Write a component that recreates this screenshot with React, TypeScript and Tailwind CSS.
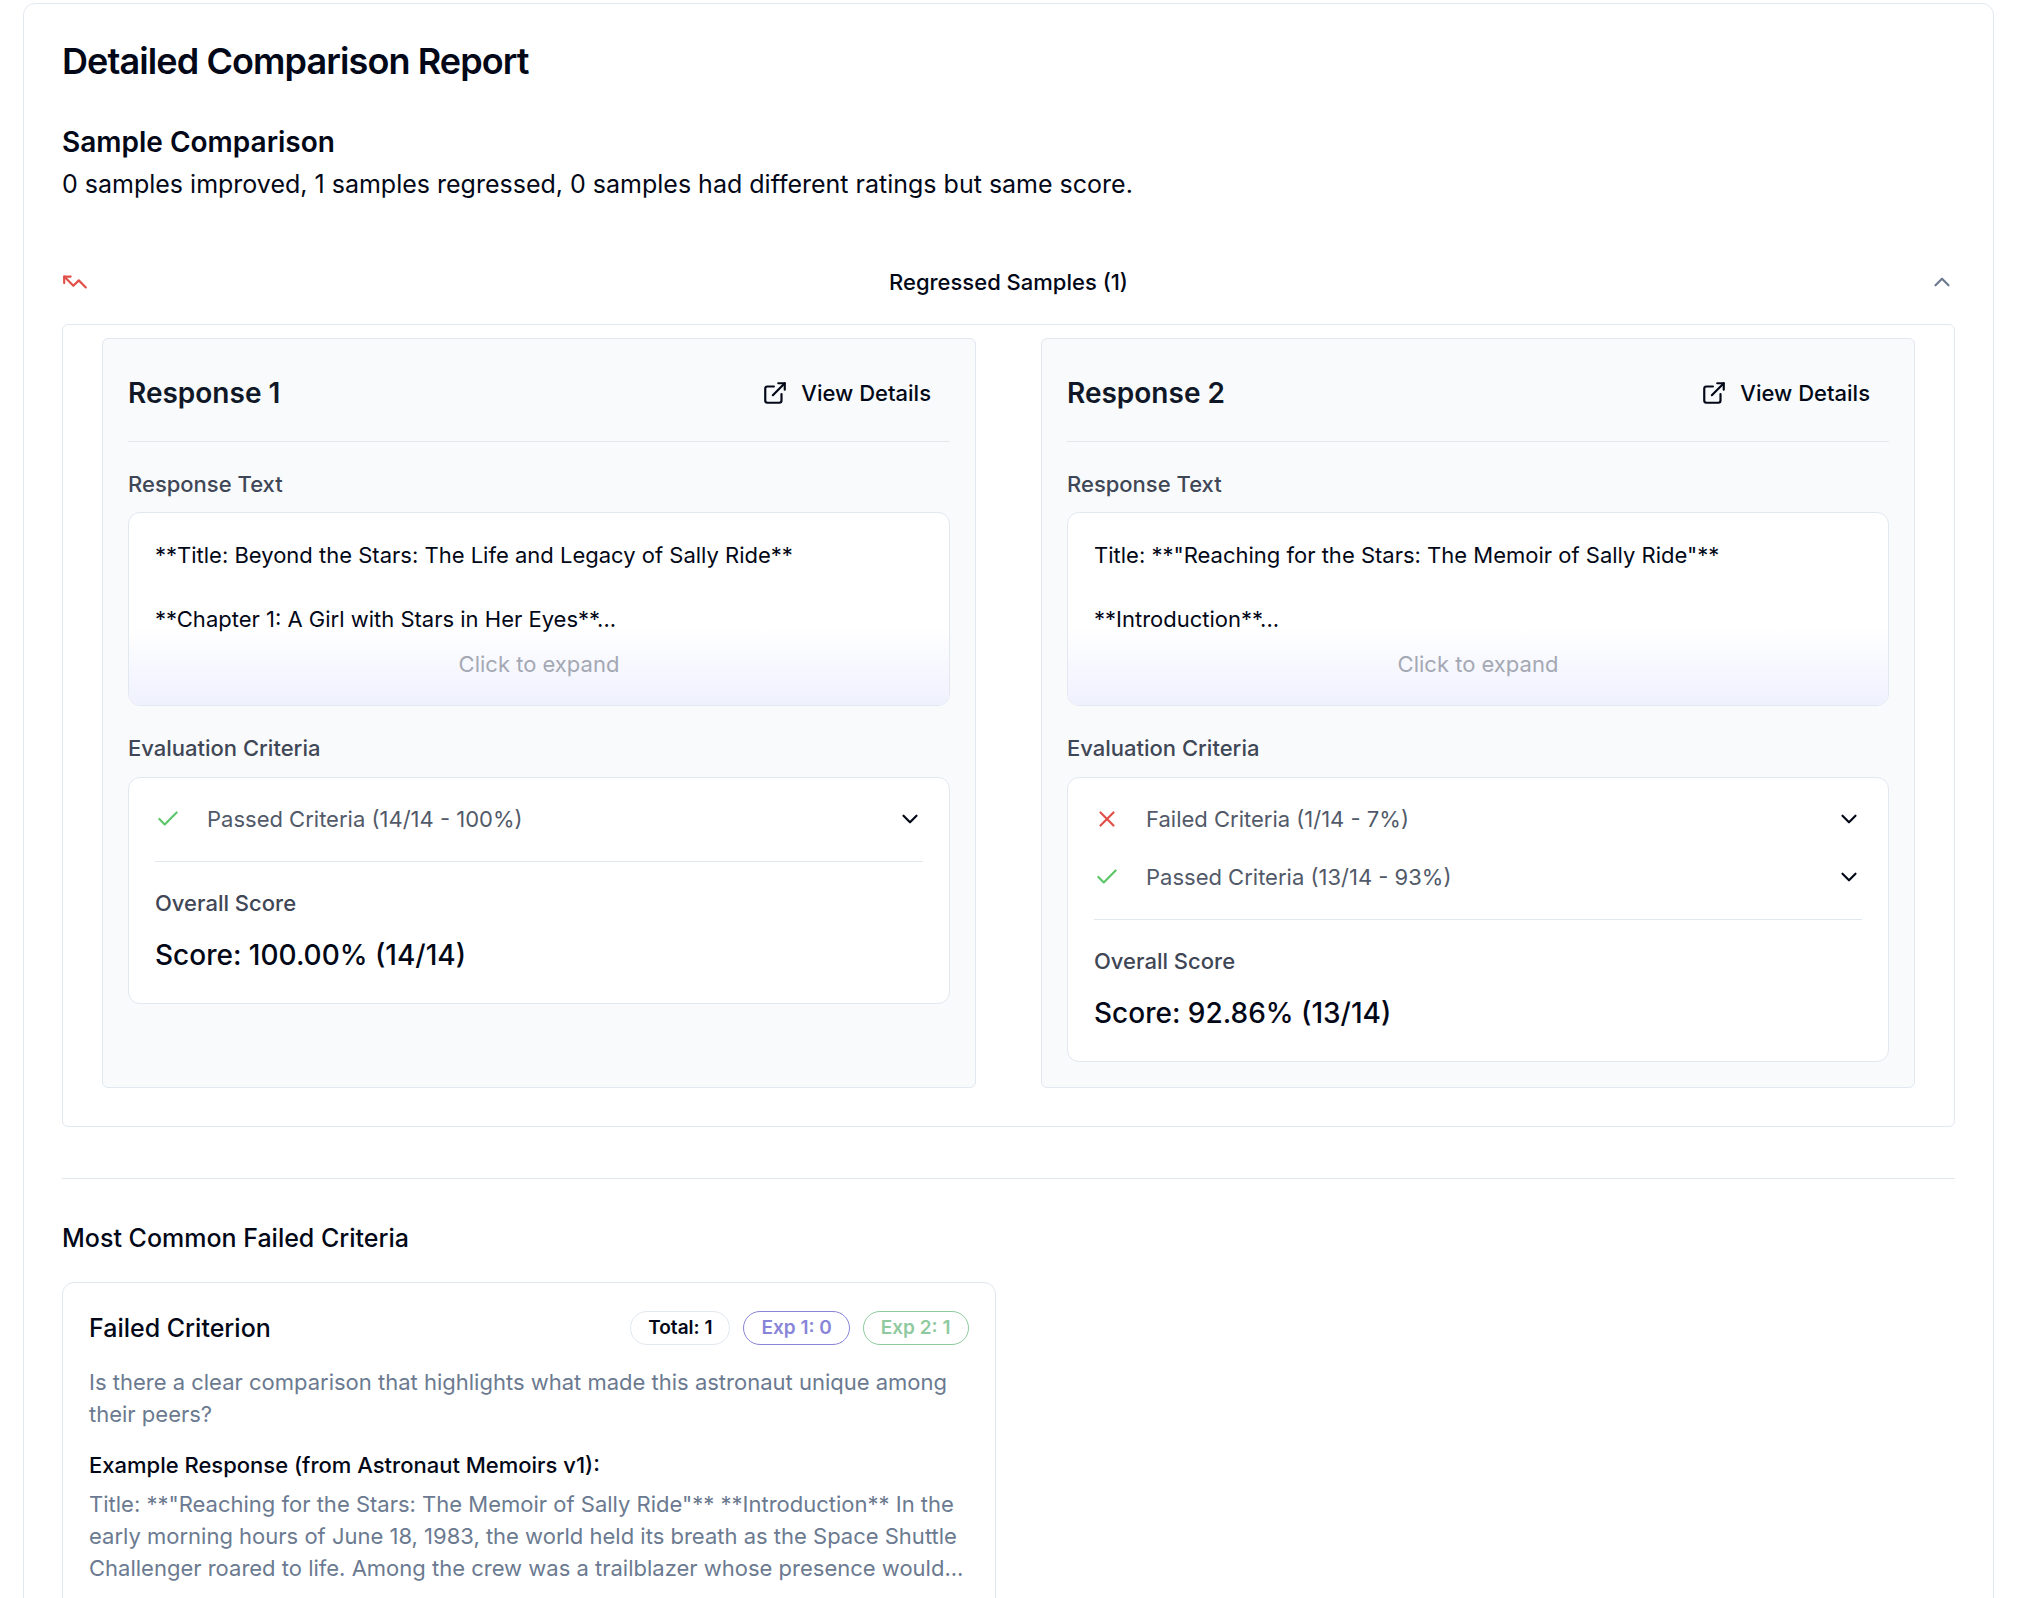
import { useState } from 'react';
import { Check, ChevronDown, ChevronUp, ExternalLink, TrendingDown, X } from 'lucide-react';

type Criterion = { kind: 'passed' | 'failed'; label: string };

type ResponseData = {
  title: string;
  lines: string[];
  criteria: Criterion[];
  score: string;
};

const responses: ResponseData[] = [
  {
    title: 'Response 1',
    lines: [
      '**Title: Beyond the Stars: The Life and Legacy of Sally Ride**',
      '**Chapter 1: A Girl with Stars in Her Eyes**...',
    ],
    criteria: [{ kind: 'passed', label: 'Passed Criteria (14/14 - 100%)' }],
    score: 'Score: 100.00% (14/14)',
  },
  {
    title: 'Response 2',
    lines: ['Title: **"Reaching for the Stars: The Memoir of Sally Ride"**', '**Introduction**...'],
    criteria: [
      { kind: 'failed', label: 'Failed Criteria (1/14 - 7%)' },
      { kind: 'passed', label: 'Passed Criteria (13/14 - 93%)' },
    ],
    score: 'Score: 92.86% (13/14)',
  },
];

function CriteriaRow({ kind, label }: Criterion) {
  return (
    <button type="button" className="flex w-full items-center gap-[26px] text-left text-[#525a69]">
      {kind === 'passed' ? (
        <Check size={26} className="shrink-0 text-[#5cc66a]" />
      ) : (
        <X size={26} className="shrink-0 text-[#e14f49]" />
      )}
      <span className="flex-1">{label}</span>
      <ChevronDown size={26} className="shrink-0 text-[#020817]" />
    </button>
  );
}

function ResponseCard({ title, lines, criteria, score }: ResponseData) {
  return (
    <section className="rounded-md border border-slate-200 bg-[#f9fafc] p-[25px]">
      <div className="flex items-center justify-between border-b border-gray-200 pb-[19px]">
        <h3 className="text-[28px] font-semibold leading-[44px] text-gray-900">{title}</h3>
        <a href="#details" className="flex h-[58px] items-center gap-[13px] px-[19px] font-medium">
          <ExternalLink size={26} />
          View Details
        </a>
      </div>

      <h4 className="mt-[26px] font-medium text-[#3f4756]">Response Text</h4>
      <button
        type="button"
        className="relative mt-3 block w-full overflow-hidden rounded-xl border border-slate-200 bg-white px-[26px] pb-[25px] pt-[26px] text-left"
      >
        <span className="absolute inset-x-0 bottom-0 h-[77px] bg-linear-to-t from-[#eff1fe] to-white" />
        <span className="relative block">{lines[0]}</span>
        <span className="relative mt-8 block">{lines[1]}</span>
        <span className="relative mt-[13px] block text-center text-[#a4a8b3]">Click to expand</span>
      </button>

      <h4 className="mt-[26px] font-medium text-[#3f4756]">Evaluation Criteria</h4>
      <div className="mt-[13px] rounded-xl border border-slate-200 bg-white px-[26px] pb-[26px] pt-[25px]">
        <div className="flex flex-col gap-[26px]">
          {criteria.map((c) => (
            <CriteriaRow key={c.label} {...c} />
          ))}
        </div>
        <div className="mt-[26px] border-t border-slate-200 pt-[25px]">
          <p className="font-medium text-[#3f4756]">Overall Score</p>
          <p className="mt-3.5 text-[28px] font-medium leading-[44px]">{score}</p>
        </div>
      </div>
    </section>
  );
}

function Badge({ label, className }: { label: string; className: string }) {
  return (
    <span
      className={`flex h-[34px] items-center rounded-full border px-[17px] text-[19px] font-semibold ${className}`}
    >
      {label}
    </span>
  );
}

export default function App() {
  const [open, setOpen] = useState(true);

  return (
    <div className="h-screen overflow-hidden bg-white pl-[23px] pr-[28px] pt-[3px] font-['Inter','Liberation_Sans',sans-serif] text-[22px] leading-8 text-[#020817]">
      <main className="rounded-xl border border-slate-200 p-[38px]">
        <h1 className="text-[36px] font-semibold leading-[38px] tracking-tight">
          Detailed Comparison Report
        </h1>

        <h2 className="mt-10 text-[28px] font-semibold leading-[44px]">Sample Comparison</h2>
        <p className="text-[25px] leading-10">
          0 samples improved, 1 samples regressed, 0 samples had different ratings but same score.
        </p>

        <button
          type="button"
          aria-expanded={open}
          onClick={() => setOpen(!open)}
          className="mt-9 flex w-full items-center justify-between py-[26px] font-medium"
        >
          <TrendingDown size={26} className="rotate-180 text-[#e14f49]" />
          Regressed Samples (1)
          {open ? (
            <ChevronUp size={26} className="text-[#6b7a90]" />
          ) : (
            <ChevronDown size={26} className="text-[#6b7a90]" />
          )}
        </button>

        {open && (
          <div className="grid grid-cols-2 gap-[65px] rounded-md border border-slate-200 px-[39px] pb-[38px] pt-[13px]">
            {responses.map((r) => (
              <ResponseCard key={r.title} {...r} />
            ))}
          </div>
        )}

        <hr className="mt-[51px] border-slate-200" />

        <h2 className="mt-[39px] text-[25px] font-medium leading-10">Most Common Failed Criteria</h2>
        <div className="mt-6 grid grid-cols-2 gap-[26px]">
          <article className="rounded-xl border border-slate-200 p-[26px]">
            <div className="flex items-center justify-between">
              <h3 className="text-[25px] font-medium leading-[38px]">Failed Criterion</h3>
              <div className="flex gap-[13px]">
                <Badge label="Total: 1" className="border-slate-200" />
                <Badge label="Exp 1: 0" className="border-[#8884d8] text-[#8884d8]" />
                <Badge label="Exp 2: 1" className="border-[#8fca9f] text-[#8fca9f]" />
              </div>
            </div>
            <p className="mt-[19px] text-[#6b7a90]">
              Is there a clear comparison that highlights what made this astronaut unique among their peers?
            </p>
            <h4 className="mt-[19px] font-medium">Example Response (from Astronaut Memoirs v1):</h4>
            <p className="mt-[7px] line-clamp-3 text-[#6b7a90]">
              Title: **"Reaching for the Stars: The Memoir of Sally Ride"** **Introduction** In the early
              morning hours of June 18, 1983, the world held its breath as the Space Shuttle Challenger
              roared to life. Among the crew was a trailblazer whose presence would...
            </p>
          </article>
        </div>
      </main>
    </div>
  );
}
